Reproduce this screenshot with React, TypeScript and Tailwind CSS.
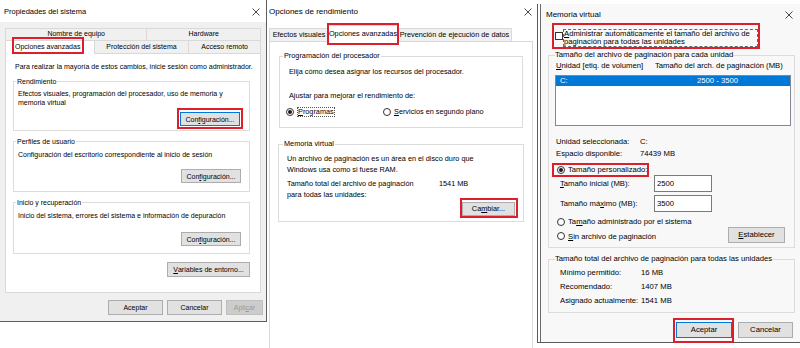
import React from 'react';

const Close = () => (
    <svg width="8" height="8" viewBox="0 0 8 8" className="shrink-0">
        <path d="M0.5 0.5L7.5 7.5M7.5 0.5L0.5 7.5" stroke="#1a1a1a" strokeWidth="0.8" />
    </svg>
);

const Radio = ({ on = false }: { on?: boolean }) => (
    <span className="w-[8px] h-[8px] shrink-0 rounded-full border border-[#333] bg-white flex items-center justify-center">
        {on && <span className="w-[4px] h-[4px] rounded-full bg-[#1a1a1a]" />}
    </span>
);

interface BtnProps {
    className?: string;
    primary?: boolean;
    disabled?: boolean;
    children: React.ReactNode;
}

const Btn = ({ className = '', primary, disabled, children }: BtnProps) => (
    <div
        className={`flex items-center justify-center leading-none border ${
            disabled
                ? 'bg-[#cccccc] border-[#bfbfbf] text-[#9a9a9a]'
                : primary
                ? 'bg-[#e1e1e1] border-[#0078d7]'
                : 'bg-[#e1e1e1] border-[#adadad]'
        } ${className}`}
    >
        {children}
    </div>
);

// red highlight drawn over a control
const Mark = ({ className }: { className: string }) => (
    <span className={`absolute border-2 border-[#dc1f2a] pointer-events-none ${className}`} />
);

const SystemProps = () => (
    <div className="w-[267px] h-[322px] shrink-0 flex flex-col bg-[#f0f0f0] border-r border-b border-[#5f5f5f] text-[7px]">
        <div className="h-[22px] shrink-0 bg-white flex items-center justify-between pl-[4px] pr-[6px] pt-px">
            <span className="text-[7.5px]">Propiedades del sistema</span>
            <Close />
        </div>
        <div className="pt-[6px] px-[5px]">
            <div className="flex h-[12px]">
                <div className="w-[142px] border-t border-l border-[#d9d9d9] flex items-center justify-center">Nombre de equipo</div>
                <div className="w-[115px] border-t border-x border-[#d9d9d9] flex items-center justify-center">Hardware</div>
            </div>
            <div className="flex h-[13px] relative z-10">
                <div className="relative w-[90px] h-[14px] bg-white border-t border-x border-[#d9d9d9] flex items-center pl-[9px]">
                    Opciones avanzadas
                    <Mark className="left-[6px] -top-[4px] w-[72px] h-[17px]" />
                </div>
                <div className="w-[95px] border-t border-r border-[#d9d9d9] flex items-center justify-center">Protección del sistema</div>
                <div className="w-[72px] border-t border-r border-[#d9d9d9] flex items-center justify-center">Acceso remoto</div>
            </div>
            <div className="h-[240px] bg-white border border-[#d9d9d9] pt-[8px] pl-[7px]">
                <p className="pl-[2px] leading-[9px]">Para realizar la mayoría de estos cambios, inicie sesión como administrador.</p>

                <fieldset className="mt-[6px] w-[237px] h-[54px] border border-[#dcdcdc] px-[2px]">
                    <legend className="px-px leading-[9px]">Rendimiento</legend>
                    <p className="mt-[3px] pl-[2px] leading-[9px]">
                        Efectos visuales, programación del procesador, uso de memoria y
                        <br />
                        memoria virtual
                    </p>
                    <div className="flex justify-end pr-[7px] mt-[5px]">
                        <div className="relative">
                            <Btn primary className="w-[60px] h-[14px]">Con<u>f</u>iguración...</Btn>
                            <Mark className="-left-[3px] -right-[3px] -top-[4px] -bottom-[3px]" />
                        </div>
                    </div>
                </fieldset>

                <fieldset className="mt-[6px] w-[237px] h-[55px] border border-[#dcdcdc] px-[2px]">
                    <legend className="px-px leading-[9px]">Perfiles de usuario</legend>
                    <p className="mt-[4px] pl-[2px] leading-[9px]">Configuración del escritorio correspondiente al inicio de sesión</p>
                    <div className="flex justify-end pr-[6px] mt-[10px]">
                        <Btn className="w-[60px] h-[14px]">Con<u>f</u>iguración...</Btn>
                    </div>
                </fieldset>

                <fieldset className="mt-[6px] w-[237px] h-[56px] border border-[#dcdcdc] px-[2px]">
                    <legend className="px-px leading-[9px]">Inicio y recuperación</legend>
                    <p className="mt-[4px] pl-[2px] leading-[9px]">Inicio del sistema, errores del sistema e información de depuración</p>
                    <div className="flex justify-end pr-[6px] mt-[12px]">
                        <Btn className="w-[60px] h-[14px]">Con<u>f</u>iguración...</Btn>
                    </div>
                </fieldset>

                <div className="w-[237px] flex justify-end mt-[8px]">
                    <Btn className="w-[83px] h-[15px]"><u>V</u>ariables de entorno...</Btn>
                </div>
            </div>
        </div>
        <div className="mt-[7px] pl-[108px] flex gap-[4px]">
            <Btn className="w-[55px] h-[15px]">Aceptar</Btn>
            <Btn className="w-[55px] h-[15px]">Cancelar</Btn>
            <Btn disabled className="w-[37px] h-[15px]">Apli<u>c</u>ar</Btn>
        </div>
    </div>
);

const PerfOptions = () => (
    <div className="w-[270px] h-[348px] shrink-0 flex flex-col bg-white text-[7.3px]">
        <div className="h-[24px] shrink-0 flex items-center justify-between pl-[2px] pr-[5px]">
            <span className="text-[8px]">Opciones de rendimiento</span>
            <Close />
        </div>
        <div className="flex h-[13px] mt-[4px] pl-[2px] relative z-10 shrink-0">
            <div className="w-[59px] border-t border-l border-[#d9d9d9] bg-[#f0f0f0] flex items-center justify-center">Efectos visuales</div>
            <div className="relative w-[70px] h-[17px] -mt-[3px] bg-white border-t border-x border-[#d9d9d9] flex items-center justify-center">
                Opciones avanzadas
                <Mark className="-left-[2px] -top-[3px] w-[72px] h-[22px]" />
            </div>
            <div className="w-[114px] border-t border-r border-[#d9d9d9] bg-[#f0f0f0] flex items-center justify-center">Prevención de ejecución de datos</div>
        </div>
        <div className="flex-1 ml-[2px] mr-[4px] border-t border-x border-[#d9d9d9] pt-[9px] pl-[9px]">
            <fieldset className="w-[244px] h-[77px] border border-[#dcdcdc] px-[3px]">
                <legend className="px-px leading-[10px]">Programación del procesador</legend>
                <p className="mt-[6px] pl-[6px] leading-[10px]">Elija cómo desea asignar los recursos del procesador.</p>
                <p className="mt-[14px] pl-[6px] leading-[10px]">Ajustar para mejorar el rendimiento de:</p>
                <div className="mt-[6px] pl-[3px] h-[10px] flex items-center">
                    <div className="w-[97px] flex items-center gap-[3px]">
                        <Radio on />
                        <span className="border border-dotted border-[#555] leading-[8px]"><u>P</u>rogramas</span>
                    </div>
                    <div className="flex items-center gap-[3px]">
                        <Radio />
                        <span><u>S</u>ervicios en segundo plano</span>
                    </div>
                </div>
            </fieldset>

            <fieldset className="mt-[11px] -ml-px w-[246px] h-[83px] border border-[#dcdcdc] px-[4px]">
                <legend className="px-px leading-[10px]">Memoria virtual</legend>
                <p className="mt-[4px] pl-[4px] leading-[11px]">
                    Un archivo de paginación es un área en el disco duro que
                    <br />
                    Windows usa como si fuese RAM.
                </p>
                <div className="mt-[3px] pl-[4px] flex leading-[11px]">
                    <span className="w-[152px]">
                        Tamaño total del archivo de paginación
                        <br />
                        para todas las unidades:
                    </span>
                    <span>1541 MB</span>
                </div>
                <div className="mt-[2px] flex justify-end pr-[4px]">
                    <div className="relative">
                        <Btn className="w-[53px] h-[14px]">Ca<u>m</u>biar...</Btn>
                        <Mark className="-left-[2px] -right-[3px] -top-[4px] -bottom-[2px]" />
                    </div>
                </div>
            </fieldset>
        </div>
    </div>
);

const VirtualMemory = () => (
    <div className="w-[263px] h-[339px] mt-[4px] shrink-0 bg-white border-l border-b border-[#5a5a5a] pl-[2px]">
        <div className="h-full border-l border-[#6a6a6a] bg-[#f8f8f8] flex flex-col text-[7.7px]">
            <div className="h-[19px] shrink-0 flex items-center justify-between pl-[5px] pr-[7px] pt-[2px]">
                <span className="text-[8px]">Memoria virtual</span>
                <Close />
            </div>

            <div className="ml-[11px] w-[208px] h-[26px] shrink-0 border-2 border-[#dc1f2a] flex pl-px">
                <span className="mt-[7px] w-[8px] h-[8px] border border-[#333] bg-white shrink-0" />
                <span className="mt-[4px] flex-1 h-[18px] border border-dashed border-[#666] leading-[8px]">
                    <u>A</u>dministrar automáticamente el tamaño del archivo de
                    <br />
                    paginación para todas las unidades
                </span>
            </div>

            <fieldset className="mt-px ml-[7px] w-[247px] h-[198px] shrink-0 border border-[#dcdcdc] pl-[6px] pr-[3px]">
                <legend className="leading-[10px]">Tamaño del archivo de paginación para cada unidad</legend>
                <div className="mt-px flex leading-[10px]">
                    <span className="w-[100px] pl-px"><u>U</u>nidad [etiq. de volumen]</span>
                    <span>Tamaño del arch. de paginación (MB)</span>
                </div>
                <div className="mt-[4px] h-[51px] border border-[#828790] bg-white">
                    <div className="h-[10px] bg-[#0078d7] text-white flex items-center leading-none">
                        <span className="w-[141px] pl-[4px]">C:</span>
                        <span>2500 - 3500</span>
                    </div>
                </div>
                <div className="mt-[10px] pl-px leading-[12px]">
                    <div className="flex"><span className="w-[84px]">Unidad seleccionada:</span><span>C:</span></div>
                    <div className="flex"><span className="w-[84px]">Espacio disponible:</span><span>74439 MB</span></div>
                </div>
                <div className="mt-[3px] -ml-[3px] w-[97px] h-[14px] border-2 border-[#dc1f2a] flex items-center pl-[3px] gap-[3px] relative z-10">
                    <Radio on />
                    <span className="leading-none">Tamaño personalizado:</span>
                </div>
                <div className="-mt-[2px] h-[17px] pl-[5px] flex items-center">
                    <span className="w-[94px]"><u>T</u>amaño inicial (MB):</span>
                    <span className="w-[58px] h-[17px] border border-[#7a7a7a] bg-white pl-[2px] flex items-center">2500</span>
                </div>
                <div className="mt-[3px] h-[17px] pl-[5px] flex items-center">
                    <span className="w-[94px]">Tamaño má<u>x</u>imo (MB):</span>
                    <span className="w-[58px] h-[17px] border border-[#7a7a7a] bg-white pl-[2px] flex items-center">3500</span>
                </div>
                <div className="mt-[5px] h-[10px] pl-[2px] flex items-center gap-[3px]">
                    <Radio />
                    <span>Ta<u>m</u>año administrado por el sistema</span>
                </div>
                <div className="h-[16px] pl-[2px] pr-[6px] flex items-center justify-between">
                    <div className="flex items-center gap-[3px] mt-[3px]">
                        <Radio />
                        <span><u>S</u>in archivo de paginación</span>
                    </div>
                    <Btn className="w-[57px] h-[16px]"><u>E</u>stablecer</Btn>
                </div>
            </fieldset>

            <fieldset className="mt-[6px] ml-[7px] w-[247px] h-[59px] shrink-0 border border-[#dcdcdc] pl-[6px] pr-[3px]">
                <legend className="leading-[10px]">Tamaño total del archivo de paginación para todas las unidades</legend>
                <div className="mt-[2px] pl-[5px] leading-[14px]">
                    <div className="flex"><span className="w-[81px]">Mínimo permitido:</span><span>16 MB</span></div>
                    <div className="flex"><span className="w-[81px]">Recomendado:</span><span>1407 MB</span></div>
                    <div className="flex"><span className="w-[81px]">Asignado actualmente:</span><span>1541 MB</span></div>
                </div>
            </fieldset>

            <div className="mt-[9px] pr-[7px] flex justify-end gap-[6px]">
                <div className="relative">
                    <Btn primary className="w-[56px] h-[16px]">Aceptar</Btn>
                    <Mark className="-left-[3px] -right-[2px] -top-[4px] -bottom-[5px]" />
                </div>
                <Btn className="w-[55px] h-[16px]">Cancelar</Btn>
            </div>
        </div>
    </div>
);

export default function App() {
    return (
        <div className="w-[800px] h-[348px] bg-white flex items-start overflow-hidden whitespace-nowrap text-black font-['Liberation_Sans',Arial,sans-serif]">
            <SystemProps />
            <PerfOptions />
            <VirtualMemory />
        </div>
    );
}
